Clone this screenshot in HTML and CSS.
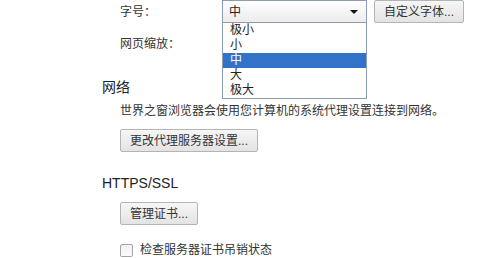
FILE: index.html
```html
<!DOCTYPE html>
<html lang="zh-CN">
<head>
<meta charset="utf-8">
<link rel="stylesheet" href="styles.css">
</head>
<body>
<div class="page">
  <div class="row font-row">
    <span class="label">字号：</span>
    <div class="select">
      <div class="select-box"><span class="select-value">中</span><span class="arrow"></span></div>
      <ul class="options">
        <li>极小</li>
        <li>小</li>
        <li class="selected">中</li>
        <li>大</li>
        <li>极大</li>
      </ul>
    </div>
    <button class="btn btn-font">自定义字体...</button>
  </div>
  <div class="row zoom-row">
    <span class="label">网页缩放：</span>
  </div>

  <h2 class="section-title net-title">网络</h2>
  <div class="section-body">
    <p class="desc">世界之窗浏览器会使用您计算机的系统代理设置连接到网络。</p>
    <button class="btn btn-proxy">更改代理服务器设置...</button>
  </div>

  <h2 class="section-title ssl-title">HTTPS/SSL</h2>
  <div class="section-body">
    <button class="btn btn-cert">管理证书...</button>
    <label class="check-row"><span class="checkbox"></span><span>检查服务器证书吊销状态</span></label>
  </div>
</div>
</body>
</html>
```

FILE: styles.css
```css
* { box-sizing: border-box; }
html, body {
  margin: 0;
  padding: 0;
  background: #fff;
  overflow: hidden;
}
body {
  font-family: "Liberation Sans", "Noto Sans CJK SC", sans-serif;
  font-size: 12px;
  color: #333;
  width: 484px;
  height: 258px;
}
.page {
  padding-left: 102px;
}
.row {
  display: flex;
  align-items: center;
  padding-left: 18px;
}
.font-row {
  height: 23px;
}
.zoom-row {
  height: 22px;
  margin-top: 10px;
}
.label {
  width: 102px;
  line-height: 16px;
}
.select {
  position: relative;
  width: 145px;
  height: 23px;
}
.select-box {
  height: 23px;
  display: flex;
  align-items: center;
  justify-content: space-between;
  padding: 0 8px 0 6px;
  border: 1px solid #8b9cb4;
  background: linear-gradient(#ffffff, #ececec);
  line-height: 16px;
  color: #222;
}
.arrow {
  width: 0;
  height: 0;
  border-left: 4px solid transparent;
  border-right: 4px solid transparent;
  border-top: 4px solid #111;
}
.options {
  position: absolute;
  left: 0;
  top: 23px;
  width: 145px;
  margin: 0;
  padding: 0;
  list-style: none;
  background: #fff;
  border: 1px solid #8b9cb4;
  border-top: none;
  z-index: 2;
}
.options li {
  height: 15px;
  line-height: 15px;
  padding-left: 7px;
  color: #222;
}
.options li.selected {
  background: #3372c9;
  color: #fff;
}
.btn {
  font-family: "Liberation Sans", "Noto Sans CJK SC", sans-serif;
  font-size: 12px;
  color: #333;
  height: 23px;
  padding: 0 8px;
  border: 1px solid #b4b4b4;
  border-radius: 2px;
  background: linear-gradient(#f6f6f6, #e3e3e3);
  line-height: 16px;
}
.btn-font {
  margin-left: 7px;
  width: 90px;
  padding: 0;
}
.section-title {
  margin: 0;
  font-size: 14px;
  font-weight: normal;
  line-height: 20px;
  color: #222;
}
.net-title {
  margin-top: 22px;
}
.ssl-title {
  margin-top: 21px;
}
.section-body {
  padding-left: 18px;
  display: flex;
  flex-direction: column;
  align-items: flex-start;
}
.desc {
  margin: 6px 0 0;
  line-height: 16px;
}
.btn-proxy {
  margin-top: 10px;
  width: 138px;
  padding: 0;
}
.btn-cert {
  margin-top: 9px;
  width: 78px;
  padding: 0;
}
.check-row {
  display: flex;
  align-items: center;
  margin-top: 17px;
  line-height: 16px;
}
.checkbox {
  width: 13px;
  height: 13px;
  border: 1px solid #a5a5a5;
  border-radius: 2px;
  background: linear-gradient(#f0f0f0, #fbfbfb);
  margin-right: 7px;
}
```
